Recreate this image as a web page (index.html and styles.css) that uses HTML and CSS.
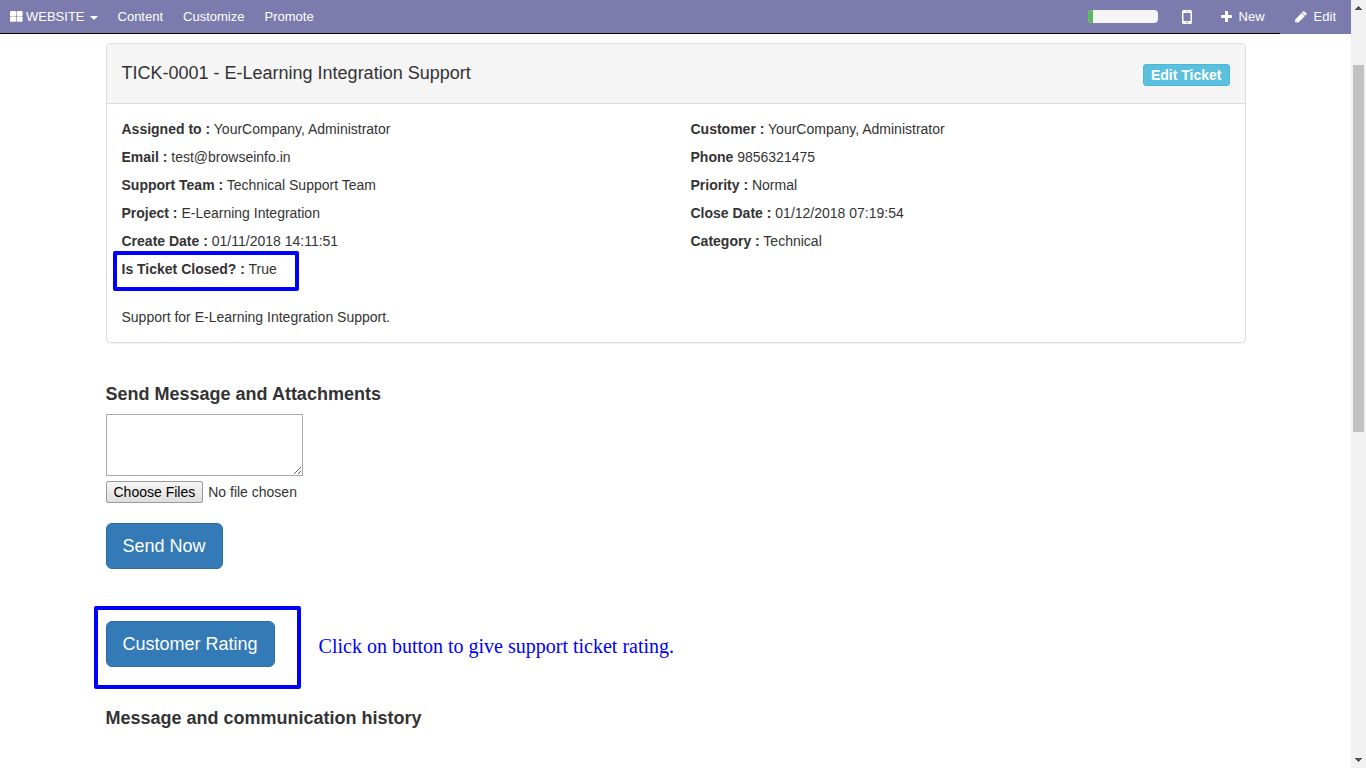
FILE: index.html
```html
<!DOCTYPE html>
<html lang="en">
<head>
<meta charset="utf-8">
<title>TICK-0001 - E-Learning Integration Support</title>
<link rel="stylesheet" href="styles.css">
</head>
<body>
<div class="page">
  <nav class="navbar">
    <div class="navbar-main">
      <a class="brand" href="#">
        <svg class="icon-grid" width="13" height="11" viewBox="0 0 13 11" fill="#fff" aria-hidden="true"><rect width="6" height="5.200" rx=".8"/><rect x="6.600" width="6" height="5.200" rx=".8"/><rect y="5.600" width="6" height="5.200" rx=".8"/><rect x="6.600" y="5.600" width="6" height="5.200" rx=".8"/></svg>
        <span>WEBSITE</span><span class="caret"></span>
      </a>
      <a class="nav-link" href="#">Content</a>
      <a class="nav-link" href="#">Customize</a>
      <a class="nav-link" href="#">Promote</a>
      <span class="spacer"></span>
      <div class="progress"><div class="progress-bar"></div></div>
      <a class="nav-action" href="#" aria-label="Mobile preview">
        <svg width="10" height="14" viewBox="0 0 10 14" aria-hidden="true"><path fill="#fff" fill-rule="evenodd" d="M1.500 0h7A1.500 1.500 0 0 1 10 1.500v11A1.500 1.500 0 0 1 8.500 14h-7A1.500 1.500 0 0 1 0 12.500v-11A1.500 1.500 0 0 1 1.500 0zM1.500 3v8h7V3zM3.500 1.200v.6h3v-.6zM5 11.700a.8.8 0 1 0 0 1.600.8.8 0 0 0 0-1.600z"/></svg>
      </a>
      <a class="nav-action" href="#">
        <svg width="11" height="11" viewBox="0 0 11 11" aria-hidden="true"><path fill="#fff" d="M4.700 0h1.600q.7 0 .7.700V4h3.300q.7 0 .7.700v1.600q0 .7-.7.700H7v3.300q0 .7-.7.700H4.700q-.7 0-.7-.7V7H.7Q0 7 0 6.300V4.700Q0 4 .7 4H4V.7Q4 0 4.700 0z"/></svg>
        <span>New</span>
      </a>
    </div>
    <a class="nav-action" href="#">
      <svg width="12" height="12" viewBox="0 0 12 12" aria-hidden="true"><path fill="#fff" d="M8.100.5q.7-.7 1.400 0l1.800 1.800q.7.700 0 1.400l-1.100 1.100L7 1.600zM6.600 2L9.800 5.200 3.400 11.600H.2V8.400z"/><path fill="#7c7bad" d="M1 9.500l1.300 1.300h-.6L1 10.100z"/></svg>
      <span>Edit</span>
    </a>
  </nav>

  <main class="container">
    <section class="panel">
      <header class="panel-heading">
        <h1 class="panel-title">TICK-0001 - E-Learning Integration Support</h1>
        <button class="btn-edit" type="button">Edit Ticket</button>
      </header>
      <div class="panel-body">
        <div class="fields">
          <div class="column">
            <div><b>Assigned to :</b> YourCompany, Administrator</div>
            <div><b>Email :</b> test@browseinfo.in</div>
            <div><b>Support Team :</b> Technical Support Team</div>
            <div><b>Project :</b> E-Learning Integration</div>
            <div><b>Create Date :</b> 01/11/2018 14:11:51</div>
            <div class="marked"><b>Is Ticket Closed? :</b> True<span class="mark mark-closed"></span></div>
          </div>
          <div class="column">
            <div><b>Customer :</b> YourCompany, Administrator</div>
            <div><b>Phone</b> 9856321475</div>
            <div><b>Priority :</b> Normal</div>
            <div><b>Close Date :</b> 01/12/2018 07:19:54</div>
            <div><b>Category :</b> Technical</div>
          </div>
        </div>
        <p class="description">Support for E-Learning Integration Support.</p>
      </div>
    </section>

    <form class="message-form">
      <h2 class="section-title"><label for="message">Send Message and Attachments</label></h2>
      <textarea class="message" id="message"></textarea>
      <input class="files" type="file" multiple aria-label="Attachments">
      <button class="btn-primary" type="button">Send Now</button>
    </form>

    <div class="rating">
      <div class="marked">
        <button class="btn-primary" type="button">Customer Rating</button>
        <span class="mark mark-rating"></span>
      </div>
      <p class="note">Click on button to give support ticket rating.</p>
    </div>

    <h2 class="section-title">Message and communication history</h2>
  </main>
</div>
<div class="scrollbar" aria-hidden="true">
  <svg width="7" height="4" viewBox="0 0 7 4"><path fill="#505050" d="M3 0h1v1h1v1h1v1h1v1H0V3h1V2h1V1h1z"/></svg>
  <div class="track"><div class="thumb"></div></div>
  <svg width="7" height="4" viewBox="0 0 7 4"><path fill="#505050" d="M0 0h7v1H6v1H5v1H4v1H3V3H2V2H1V1H0z"/></svg>
</div>
</body>
</html>
```
FILE: styles.css
```css
* { box-sizing: border-box; }

body {
  margin: 0;
  height: 100vh;
  overflow: hidden;
  display: flex;
  background: #fff;
  color: #333;
  font: 14px/20px "Liberation Sans", Arial, sans-serif;
}

h1, h2, p { margin: 0; }
button { font-family: inherit; cursor: pointer; }

.page { flex: 1; min-width: 0; overflow: hidden; }

/* Top bar */
.navbar {
  display: flex;
  height: 34px;
  background: #7c7bad;
  font-size: 13px;
}
.navbar a { color: #fff; text-decoration: none; }
.navbar-main {
  flex: 1;
  display: flex;
  align-items: center;
  border-bottom: 1px solid #000;
}
.brand { display: flex; align-items: center; gap: 3px; padding: 0 10px; }
.caret {
  margin: 2px 0 0 2px;
  border: 4px solid transparent;
  border-top-color: #fff;
  border-bottom: 0;
}
.nav-link { padding: 0 10px; }
.spacer { flex: 1; }
.progress {
  width: 70px;
  height: 13px;
  margin-right: 9px;
  border-radius: 4px;
  overflow: hidden;
  background: #f5f5f5;
}
.progress-bar { width: 5px; height: 100%; background: #5cb85c; }
.nav-action {
  display: flex;
  align-items: center;
  gap: 7px;
  height: 33px;
  padding: 0 15px;
}
.nav-action + .nav-action { padding-left: 14px; }

/* Ticket panel */
.container { max-width: 1140px; margin: 9px auto 0; }
.panel {
  border: 1px solid #ddd;
  border-radius: 4px;
  box-shadow: 0 1px 1px rgba(0, 0, 0, .05);
}
.panel-heading {
  display: flex;
  justify-content: space-between;
  align-items: center;
  height: 60px;
  padding: 2px 15px 0;
  background: #f5f5f5;
  border-bottom: 1px solid #ddd;
  border-radius: 3px 3px 0 0;
}
.panel-title { font-size: 18px; font-weight: 400; padding-bottom: 4px; }
.btn-edit {
  height: 22px;
  padding: 0 7px;
  border: 1px solid #46b8da;
  border-radius: 3px;
  background: #5bc0de;
  color: #fff;
  font-size: 14px;
  font-weight: 700;
}
.panel-body { padding: 15px; }
.fields { display: grid; grid-template-columns: 1fr 1fr; column-gap: 30px; }
.column { display: flex; flex-direction: column; align-items: flex-start; gap: 8px; }
.description { margin-top: 28px; }

/* Highlight frames */
.marked { position: relative; }
.mark {
  position: absolute;
  border: 4px solid #00f;
  border-radius: 2px;
  pointer-events: none;
}
.mark-closed { inset: -8px -22px -12px -9px; }
.mark-rating { inset: -15px -26px -22px -12px; }

/* Message form */
.message-form {
  display: flex;
  flex-direction: column;
  align-items: flex-start;
  margin-top: 41px;
}
.section-title { font-size: 18px; }
.message {
  width: 197px;
  height: 62px;
  margin: 10px 0 5px;
  border: 1px solid #a9a9a9;
}
.files { height: 22px; margin-bottom: 20px; font: inherit; }
.files::file-selector-button {
  height: 22px;
  margin: 0 5px 0 0;
  padding: 0 7px;
  border: 1px solid #999;
  border-radius: 2px;
  background: linear-gradient(#f6f6f6, #dedede);
  color: #000;
  font: inherit;
}
.btn-primary {
  display: block;
  padding: 10px 16px;
  border: 1px solid #2e6da4;
  border-radius: 6px;
  background: #337ab7;
  color: #fff;
  font-size: 18px;
  line-height: 24px;
}
.rating {
  display: flex;
  align-items: center;
  gap: 44px;
  margin: 52px 0 41px;
}
.note {
  padding-top: 4px;
  color: #00f;
  font: 20px/24px "Liberation Serif", "Times New Roman", serif;
}

/* Window scrollbar */
.scrollbar {
  display: flex;
  flex-direction: column;
  align-items: center;
  width: 15px;
  padding: 6px 0;
  background: #f1f1f1;
}
.track { flex: 1; width: 11px; padding: 55px 0 0; }
.thumb { height: 53%; min-height: 20px; background: #c1c1c1; }
```
